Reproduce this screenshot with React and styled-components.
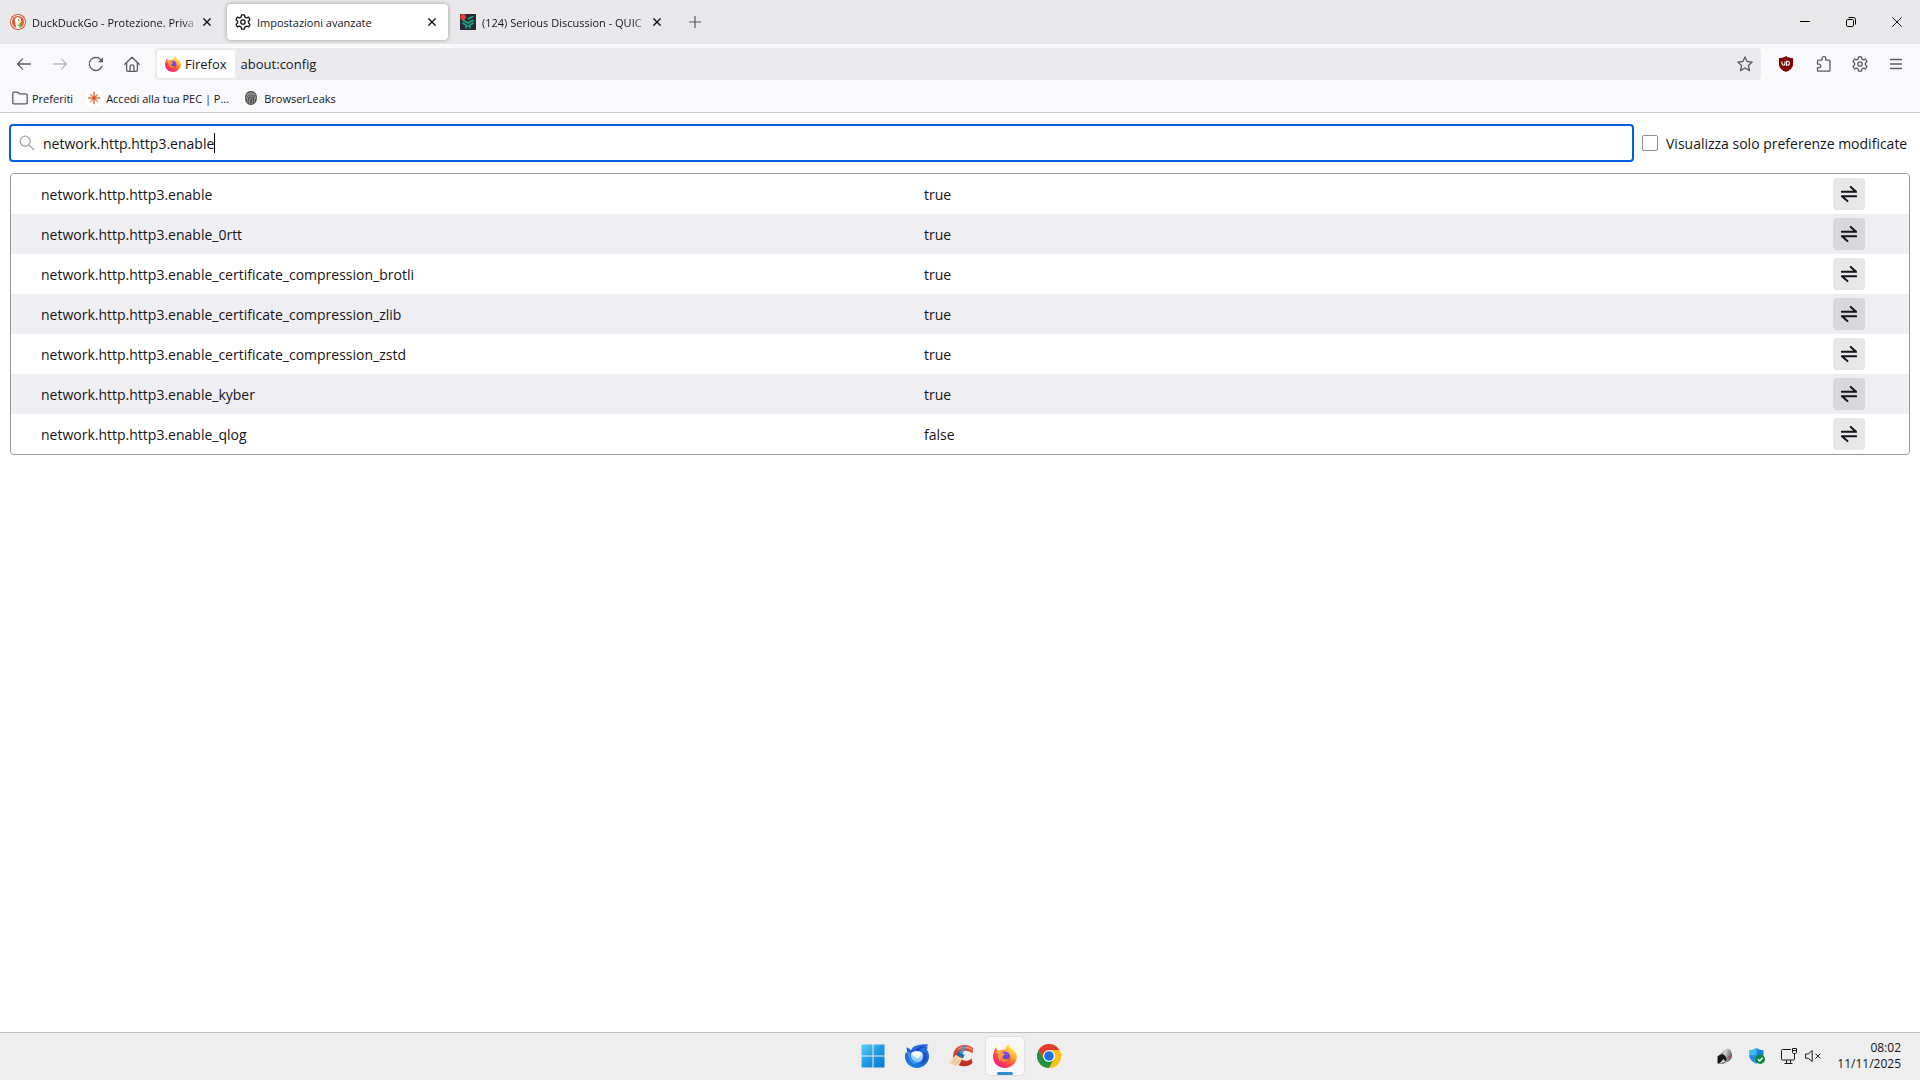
import styled, { createGlobalStyle, css } from "styled-components";

const prefs = [
  { name: "network.http.http3.enable", value: "true" },
  { name: "network.http.http3.enable_0rtt", value: "true" },
  { name: "network.http.http3.enable_certificate_compression_brotli", value: "true" },
  { name: "network.http.http3.enable_certificate_compression_zlib", value: "true" },
  { name: "network.http.http3.enable_certificate_compression_zstd", value: "true" },
  { name: "network.http.http3.enable_kyber", value: "true" },
  { name: "network.http.http3.enable_qlog", value: "false" },
];

const tabs = [
  { title: "DuckDuckGo - Protezione. Priva", icon: DuckIcon, faded: true },
  { title: "Impostazioni avanzate", icon: GearIcon, active: true },
  { title: "(124) Serious Discussion - QUIC", icon: ForumIcon, faded: true },
];

export default function App() {
  return (
    <Window>
      <GlobalStyle />
      <TabStrip>
        {tabs.map(({ title, icon: Icon, active, faded }) => (
          <Tab key={title} $active={active}>
            <Icon />
            <TabLabel $faded={faded}>{title}</TabLabel>
            <TabClose aria-label="Chiudi scheda">
              <CrossIcon size={8} width={1.4} />
            </TabClose>
          </Tab>
        ))}
        <NewTab aria-label="Nuova scheda">
          <svg width="12" height="12" viewBox="0 0 12 12">
            <path d="M6 0v12M0 6h12" stroke="#5b5b66" strokeWidth="1.2" />
          </svg>
        </NewTab>
        <WindowControls>
          <WindowButton aria-label="Riduci a icona">
            <svg width="10" height="10" viewBox="0 0 10 10">
              <path d="M0 4.5h10" stroke="#000" />
            </svg>
          </WindowButton>
          <WindowButton aria-label="Ripristina">
            <svg width="10" height="10" viewBox="0 0 10 10" fill="none" stroke="#000">
              <rect x=".5" y="2.5" width="7" height="7" rx="1.2" />
              <path d="M2.5 .5h5a2 2 0 0 1 2 2v5" />
            </svg>
          </WindowButton>
          <WindowButton aria-label="Chiudi">
            <CrossIcon size={10} width={1} />
          </WindowButton>
        </WindowControls>
      </TabStrip>

      <NavBar>
        <ToolButton aria-label="Indietro">
          <ArrowIcon />
        </ToolButton>
        <ToolButton aria-label="Avanti" disabled>
          <ArrowIcon flip />
        </ToolButton>
        <ToolButton aria-label="Ricarica">
          <svg {...stroke16}>
            <path d="M13.9 10.2A6.5 6.5 0 1 1 12.6 3.6L14.2 5.2" />
            <path d="M15 1.3v5h-5z" fill="currentColor" stroke="none" />
          </svg>
        </ToolButton>
        <ToolButton aria-label="Pagina iniziale">
          <svg {...stroke16}>
            <path d="M.8 8.2 8 1.2l7.2 7M2.6 6.8v7.3c0 .7.5 1.2 1.2 1.2h8.4c.7 0 1.2-.5 1.2-1.2V6.8" />
            <path d="M6 15v-4.2a2 2 0 0 1 4 0V15" />
          </svg>
        </ToolButton>
        <UrlBar>
          <Identity>
            <FirefoxIcon id="ff-url" size={16} />
            Firefox
          </Identity>
          <UrlInput aria-label="Indirizzo" defaultValue="about:config" />
          <StarButton aria-label="Aggiungi ai segnalibri">
            <svg {...stroke16}>
              <path d="m8 .9 2.1 4.6 5.1.6-3.8 3.4 1.1 5.1L8 12l-4.5 2.6 1.1-5.1L.8 6.1l5.1-.6z" />
            </svg>
          </StarButton>
        </UrlBar>
        <ToolGroup>
          <ToolButton aria-label="uBlock Origin">
            <ShieldIcon />
          </ToolButton>
          <ToolButton aria-label="Estensioni">
            <svg {...stroke16}>
              <path d="M3.9 4.2H6V2.6a1.9 1.9 0 0 1 3.8 0v1.6h3.3c.5 0 .9.4.9.9v9.2c0 .5-.4.9-.9.9H2.4c-.5 0-.9-.4-.9-.9v-2.6H3a1.7 1.7 0 0 0 0-3.5H1.5V5.1c0-.5.4-.9.9-.9z" />
            </svg>
          </ToolButton>
          <ToolButton aria-label="Impostazioni">
            <GearIcon />
          </ToolButton>
          <ToolButton aria-label="Menu">
            <svg {...stroke16}>
              <path d="M2.5 3.5h11M2.5 8h11M2.5 12.5h11" />
            </svg>
          </ToolButton>
        </ToolGroup>
      </NavBar>

      <Bookmarks>
        <Bookmark href="#preferiti">
          <svg {...stroke16} stroke="#5b5b66">
            <path d="M.8 12.7V3.3c0-.6.5-1.1 1.1-1.1h4l1.6 1.7h6.6c.6 0 1.1.5 1.1 1.1v7.7c0 .6-.5 1.1-1.1 1.1H1.9c-.6 0-1.1-.5-1.1-1.1z" />
          </svg>
          Preferiti
        </Bookmark>
        <Bookmark href="#pec">
          <svg width="16" height="16" viewBox="0 0 16 16">
            <rect width="16" height="16" rx="3" fill="#fff" />
            <path d="M8 1.8v12.4M1.8 8h12.4" stroke="#ee6c35" strokeWidth="1.5" />
            <path d="m4.200 4.200 7.600 7.600M11.800 4.200l-7.600 7.600" stroke="#ee6c35" strokeWidth="1.100" />
            <circle cx="8" cy="8" r="1.600" fill="#d4501c" />
          </svg>
          Accedi alla tua PEC | P...
        </Bookmark>
        <Bookmark href="#browserleaks">
          <FingerprintIcon />
          BrowserLeaks
        </Bookmark>
      </Bookmarks>

      <Page>
        <SearchRow>
          <SearchBox>
            <svg width="16" height="16" viewBox="0 0 16 16" fill="none" stroke="#a5a5a8" strokeWidth="1.3">
              <circle cx="6.2" cy="6.2" r="5" />
              <path d="m10 10 5 5" />
            </svg>
            <SearchField>
              <SearchInput aria-label="Cerca nome preferenza" defaultValue="network.http.http3.enable" />
              <Caret />
            </SearchField>
          </SearchBox>
          <Check>
            <input type="checkbox" />
            Visualizza solo preferenze modificate
          </Check>
        </SearchRow>
        <PrefTable>
          <tbody>
            {prefs.map((pref) => (
              <tr key={pref.name}>
                <NameCell scope="row">{pref.name}</NameCell>
                <ValueCell>{pref.value}</ValueCell>
                <ButtonCell>
                  <ToggleButton aria-label="Attiva/disattiva">
                    <svg width="16" height="16" viewBox="0 0 16 16" fill="none" stroke="#15141a" strokeWidth="2">
                      <path d="M.8 5.7H15L9.8.9M15.2 10.2H1l5.4 4.9" strokeLinecap="round" />
                    </svg>
                  </ToggleButton>
                </ButtonCell>
              </tr>
            ))}
          </tbody>
        </PrefTable>
      </Page>

      <Taskbar>
        <span />
        <Apps>
          <AppButton aria-label="Start">
            <WindowsIcon />
          </AppButton>
          <AppButton aria-label="Thunderbird">
            <ThunderbirdIcon />
          </AppButton>
          <AppButton aria-label="CCleaner">
            <CCleanerIcon />
          </AppButton>
          <AppButton aria-label="Firefox" $active>
            <FirefoxIcon id="ff-task" size={24} />
          </AppButton>
          <AppButton aria-label="Chrome">
            <ChromeIcon />
          </AppButton>
        </Apps>
        <Tray>
          <TrayIcons>
            <MouseIcon />
            <DefenderIcon />
            <NetworkIcon />
            <MuteIcon />
          </TrayIcons>
          <Clock>
            <span>08:02</span>
            <span>11/11/2025</span>
          </Clock>
        </Tray>
      </Taskbar>
    </Window>
  );
}

const stroke16 = {
  width: 16,
  height: 16,
  viewBox: "0 0 16 16",
  fill: "none",
  stroke: "currentColor",
  strokeWidth: 1.3,
  strokeLinejoin: "round",
  strokeLinecap: "round",
};

function CrossIcon({ size, width }) {
  return (
    <svg width={size} height={size} viewBox={`0 0 ${size} ${size}`}>
      <path d={`M.4 .4 ${size - 0.4} ${size - 0.4}M${size - 0.4} .4 .4 ${size - 0.4}`} stroke="#15141a" strokeWidth={width} />
    </svg>
  );
}

function ArrowIcon({ flip }) {
  return (
    <svg {...stroke16}>
      <path d={flip ? "M1.5 8h13M9.4 2.9 14.5 8l-5.1 5.1" : "M14.5 8h-13M6.6 2.9 1.5 8l5.1 5.1"} />
    </svg>
  );
}

function GearIcon() {
  return (
    <svg {...stroke16}>
      <path d="M6.6.8h2.8l.5 2.2 1.5.9 2.2-.7L15 5.6l-1.6 1.6v1.6l1.6 1.6-1.4 2.4-2.2-.7-1.5.9-.5 2.2H6.6L6.1 13l-1.5-.9-2.2.7L1 10.4l1.6-1.6V7.2L1 5.6l1.4-2.4 2.2.7L6.1 3z" />
      <circle cx="8" cy="8" r="2.2" />
    </svg>
  );
}

function DuckIcon() {
  return (
    <svg width="16" height="16" viewBox="0 0 16 16">
      <circle cx="8" cy="8" r="8" fill="#de5833" />
      <circle cx="8" cy="8" r="6.5" fill="none" stroke="#fff" strokeWidth="1" />
      <path d="M6.2 13.8 4.8 6.5c-.3-2 1-3.4 3-3.3 2.2.1 3.2 1.6 3.2 3.6v2L9.6 9l.5 4.6c-1.2.6-2.7.6-3.9.2z" fill="#fff" />
      <circle cx="8.6" cy="6" r=".7" fill="#2d4f8e" />
      <path d="M8.3 7.7c1.2-.5 2.6-.5 3.7-.2l-1.2 1.3H8.3z" fill="#fdd20a" />
      <path d="m8 10.6 3.4-.6v2.8L8 12.3z" fill="#65bc46" />
    </svg>
  );
}

function ForumIcon() {
  return (
    <svg width="16" height="16" viewBox="0 0 16 16">
      <rect width="16" height="16" fill="#262a33" />
      <path d="m2.5 6 5.500 3 5.500-3M2.500 9 6 11v3.500M13.500 9 10 11v3.500M8 5l5-2.500M8 11v2" fill="none" stroke="#1fa587" strokeWidth="1.7" />
      <circle cx="3" cy="3" r="2.9" fill="#f03a3a" />
    </svg>
  );
}

function FingerprintIcon() {
  return (
    <Print width="14" height="14" viewBox="0 0 14 14">
      <path d="M7 0c3.500 0 6 2.500 6 6.500 0 4-2.300 7.500-6 7.500S1 10.500 1 6.500C1 2.500 3.500 0 7 0z" fill="#4a4a4a" />
      <path
        d="M2 4.500C4 1 10 1 12 4.500M2 8c0-6.500 10-6.500 10 0M4 11.500C3 6 4 5 7 5s4 1.500 3.300 6.500M6 13c-.8-5-.5-6 1-6s1.600 2 1 6"
        fill="none"
        stroke="#c9c9c9"
        strokeWidth=".7"
      />
    </Print>
  );
}

function ShieldIcon() {
  return (
    <svg width="16" height="16" viewBox="0 0 16 16">
      <path d="M8 0c2 1.4 4 2 7 2v6c0 4-3 6.4-7 8-4-1.6-7-4-7-8V2c3 0 5-.6 7-2z" fill="#800000" />
      <path d="M4 5.5v2.200a1.500 1.500 0 0 0 3 0V5.500M8.500 5.300v3.900h1a1.900 1.900 0 1 0 0-3.900z" fill="none" stroke="#fff" strokeWidth="1.1" />
    </svg>
  );
}

function FirefoxIcon({ id, size }) {
  return (
    <svg width={size} height={size} viewBox="0 0 24 24">
      <defs>
        <linearGradient id={`${id}-a`} x1=".85" y1=".1" x2=".2" y2=".95">
          <stop offset=".05" stopColor="#fff44f" />
          <stop offset=".35" stopColor="#ffa436" />
          <stop offset=".6" stopColor="#ff5a3c" />
          <stop offset=".85" stopColor="#ff2a6b" />
          <stop offset="1" stopColor="#e31587" />
        </linearGradient>
        <linearGradient id={`${id}-b`} x1=".3" y1="0" x2=".7" y2="1">
          <stop offset="0" stopColor="#9059ff" />
          <stop offset="1" stopColor="#5b2fc4" />
        </linearGradient>
        <linearGradient id={`${id}-c`} x1="0" y1="0" x2="1" y2="1">
          <stop offset="0" stopColor="#ffbd4f" />
          <stop offset="1" stopColor="#ff6a2b" />
        </linearGradient>
      </defs>
      <path
        d="M22.7 8.5c-.5-1.3-1.6-2.6-2.4-3 .7 1.3 1.1 2.7 1.2 3.5C20.2 5.7 18 4.4 16.2 1.5c-.3-.5-.5-.9-.5-1.5-2.3 1.3-3.3 3.700-3.500 5.300-1 .1-2 .4-2.800.8L4.200 6.500c-.5-.6-.6-2.300-.5-3.200C2.200 4.200 1.300 6.200 1 7.700.4 9.100 0 11.300 0 12.500 0 18.900 5.300 24 11.900 24 18 24 23 19.700 23.900 14c.2-2 0-3.900-1.200-5.500z"
        fill={`url(#${id}-a)`}
      />
      <circle cx="11.7" cy="12.5" r="5.3" fill={`url(#${id}-b)`} />
      <path
        d="M2.3 8.3c1.700-1.700 3.600-2 5.200-1.200 1.200-.5 2.600-.5 3.600.3-1.100.3-2 1-2.100 1.700.2.600 2.300.7 3 .9-.2 1.300-2.200 1.700-2.600 2.800-.2 1.500 1.300 2.700 3.200 2.500 1.700-.2 2.300-1.200 3.600-.9-1 2.700-3.300 3.800-5.800 3.500C6.500 17.400 4 14 5.200 9.800z"
        fill={`url(#${id}-c)`}
      />
    </svg>
  );
}

function WindowsIcon() {
  return (
    <svg width="24" height="24" viewBox="0 0 24 24">
      <defs>
        <linearGradient id="win" gradientUnits="userSpaceOnUse" x1="0" y1="0" x2="24" y2="24">
          <stop offset="0" stopColor="#5fd3fb" />
          <stop offset=".5" stopColor="#1f9be6" />
          <stop offset="1" stopColor="#0574d1" />
        </linearGradient>
      </defs>
      <path d="M.5 .5h11v11H.5zM12.500 .5h11v11h-11zM.5 12.500h11v11H.5zM12.500 12.500h11v11h-11z" fill="url(#win)" />
    </svg>
  );
}

function ThunderbirdIcon() {
  return (
    <svg width="24" height="24" viewBox="0 0 24 24">
      <defs>
        <linearGradient id="tb" x1=".8" y1="0" x2=".2" y2="1">
          <stop offset="0" stopColor="#2a6fe8" />
          <stop offset=".5" stopColor="#1f62d6" />
          <stop offset="1" stopColor="#1b86e6" />
        </linearGradient>
        <linearGradient id="tb-mail" x1="0" y1="0" x2="0" y2="1">
          <stop offset="0" stopColor="#cfeaff" />
          <stop offset="1" stopColor="#7fc4fb" />
        </linearGradient>
      </defs>
      <path
        d="M1.5 3.500c2 .2 3.300 1.300 4.300 3C7.500 3 11 .8 15.500.8c2.700-.6 5.500-.6 8 0-1 .9-1.600 1.600-1.700 2.400.9.200 1.300.5 1.600.9-1 .3-1.500.6-1.600 1.100C23.300 7.300 24 9.700 24 12.300 24 18.900 18.700 24 12 24S0 19 0 12.800c0-2 .4-3.500 1-4.800l1.500 2z"
        fill="url(#tb)"
      />
      <path d="M11 6.500C13 3 17 1.800 20.500 3c-3 .2-5.200 1.400-6.500 3.500z" fill="#1a3f9e" />
      <path d="M18 8.500c2 4.500.5 9.500-4 11.500 5.500-.2 9-4.800 7.500-10.500z" fill="#1550bd" />
      <path d="M6 9.500c3-2.800 9-3 11.500.2 1.500 4.300-.5 8.300-5 8.800-4.500-.5-7.500-4.500-6.500-9z" fill="url(#tb-mail)" />
      <path d="M6 9.500c3-2.800 9-3 11.500.2l-5.200 4.800z" fill="#f5fbff" />
      <path d="M4 8c-.5 6 2 10 7 12" fill="none" stroke="#3f9bf5" strokeWidth="1.5" />
    </svg>
  );
}

function CCleanerIcon() {
  return (
    <svg width="24" height="24" viewBox="0 0 24 24">
      <defs>
        <linearGradient id="cc" x1="0" y1="0" x2="0" y2="1">
          <stop offset="0" stopColor="#e2553f" />
          <stop offset="1" stopColor="#b92a1c" />
        </linearGradient>
      </defs>
      <path
        d="M23.5 9.500 24 4C21.500 1.800 18.500.8 15 1 8.500 1.300 4 6 4.200 12c.2 6 4.800 10.300 11 10.200 3.300 0 6-1 8.300-3.200l-1-4.500c-2 1.800-4 2.500-6.300 2.200-3-.3-4.700-2.300-4.700-5 0-2.800 2-4.800 5-5 2.500-.2 4.500.8 7 2.800z"
        fill="url(#cc)"
      />
      <path d="M23.7 5C19 1.500 11 1.500 7 6.500c5-3 11.500-3 16.500.2z" fill="#f08b74" />
      <path d="m14.500 1.500 2.200 1-3.200 7.500-3-1.500z" fill="#3a9bdc" />
      <path d="m9.800 7.800 5.700 3.200-1.500 3.500-7-4z" fill="#1d6cae" />
      <path d="M6.500 10.800 13 14.500c-.8 3.500-2.500 6.500-5 7.500C5 21.500 2 20.200 0 18.200c2.700-1.500 5-4.200 6.500-7.400z" fill="#f5d6a8" />
      <path d="M7 14c-.8 2-2 3.800-3.500 5.200M10 16c-.8 2-2 3.700-3.500 5" stroke="#dcae74" strokeWidth=".8" fill="none" />
    </svg>
  );
}

function ChromeIcon() {
  return (
    <svg width="24" height="24" viewBox="0 0 24 24">
      <circle cx="12" cy="12" r="12" fill="#fbc116" />
      <path d="M12 12 6.8 15 1.6 6A12 12 0 0 1 22.4 6H12z" fill="#e33b2e" />
      <path d="M12 24A12 12 0 0 1 1.6 6l5.200 9L12 18l5.200-3z" fill="#229342" />
      <path d="M12 6h10.400A12 12 0 0 1 12 24l5.200-9z" fill="#fbc116" />
      <circle cx="12" cy="12" r="6" fill="#fff" />
      <circle cx="12" cy="12" r="4.8" fill="#1a73e8" />
    </svg>
  );
}

function MouseIcon() {
  return (
    <svg width="16" height="16" viewBox="0 0 16 16">
      <defs>
        <linearGradient id="mouse" x1="0" y1="0" x2="1" y2=".3">
          <stop offset="0" stopColor="#555" />
          <stop offset=".55" stopColor="#d0d0d0" />
          <stop offset="1" stopColor="#666" />
        </linearGradient>
      </defs>
      <path d="M1.5 8C4.500 4.500 8 1 10.500.5c2.800.2 4.500 3.500 4.500 7.500 0 3-3 5.500-7 7H1z" fill="url(#mouse)" />
      <path d="M.5 8.500C3 6.500 5 6 6.500 6.500c2 1.500 3.200 3.500 3 5.500L7 15.500H.5z" fill="#161616" />
      <path d="m2.500 15.500 4-4.500 2 3z" fill="#ddd" />
      <path d="m10.500 9.500 2.500-1" stroke="#d33" strokeWidth="1.2" />
    </svg>
  );
}

function DefenderIcon() {
  return (
    <svg width="16" height="16" viewBox="0 0 16 16">
      <path d="M7.5 0C9.500 1.500 12 2.200 14.500 2.200V7c0 4-3 7-7 8.500C3.500 14 .5 11 .5 7V2.200C3 2.200 5.500 1.500 7.500 0z" fill="#1683d8" />
      <path d="M7.5 0v7.500H.5V2.200C3 2.200 5.500 1.500 7.500 0z" fill="#3fbcf5" />
      <path d="M7.5 7.500h-7c0 3.500 3 6.500 7 8z" fill="#1a8fe0" />
      <circle cx="11.2" cy="11.2" r="4.8" fill="#10893e" />
      <path d="m8.9 11.300 1.700 1.700 3-3.200" fill="none" stroke="#fff" strokeWidth="1.3" />
    </svg>
  );
}

function NetworkIcon() {
  return (
    <svg width="16" height="16" viewBox="0 0 16 16" fill="none" stroke="#1a1a1a">
      <path d="M10 1.500H1.500a1 1 0 0 0-1 1v8.500a1 1 0 0 0 1 1h11a1 1 0 0 0 1-1V7M5.500 12v3M9.500 12v3M3.500 15.500h8" />
      <path d="M11.500 .5h4v4a1 1 0 0 1-1 1h-2a1 1 0 0 1-1-1zM11.500 2.500h4M13.500 5.500V8" />
    </svg>
  );
}

function MuteIcon() {
  return (
    <svg width="16" height="16" viewBox="0 0 16 16" fill="none" stroke="#1a1a1a">
      <path d="M.5 6v4.200h2.700l4 3.300v-11L3.200 6zM10.500 5.700l4.800 4.800M15.300 5.700l-4.800 4.800" strokeLinejoin="round" />
    </svg>
  );
}

const GlobalStyle = createGlobalStyle`
  * {
    box-sizing: border-box;
  }

  body {
    margin: 0;
    background-color: #fff;
    color: #15141a;
    font-family: "Open Sans", "Noto Sans", sans-serif;
    font-size: 14px;
  }

  button, input {
    font: inherit;
    color: inherit;
    margin: 0;
    padding: 0;
    border: 0;
    background: none;
    outline: none;
  }

  svg {
    display: block;
    flex: none;
  }
`;

const Window = styled.div`
  min-height: 100vh;
  display: flex;
  flex-direction: column;
`;

const TabStrip = styled.div`
  height: 44px;
  padding-left: 2px;
  display: flex;
  align-items: center;
  gap: 4px;
  background-color: #e9e9eb;
  font-size: 11px;
`;

const Tab = styled.div`
  width: 221px;
  height: 36px;
  padding: 0 8px;
  display: flex;
  align-items: center;
  border-radius: 4px;

  ${({ $active }) =>
    $active &&
    css`
      background-color: #fff;
      box-shadow: 0 0 4px rgba(0, 0, 0, 0.35);
    `}
`;

const TabLabel = styled.span`
  flex: 1;
  min-width: 0;
  margin-left: 6px;
  overflow: hidden;
  white-space: nowrap;
  mask-image: ${({ $faded }) => ($faded ? "linear-gradient(to left, transparent, #000 16px)" : "none")};
`;

const TabClose = styled.button`
  width: 16px;
  height: 24px;
  display: grid;
  place-items: center;
`;

const NewTab = styled.button`
  width: 36px;
  height: 36px;
  display: grid;
  place-items: center;
`;

const WindowControls = styled.div`
  margin-left: auto;
  align-self: stretch;
  display: flex;
`;

const WindowButton = styled.button`
  width: 46px;
  display: grid;
  place-items: center;
`;

const NavBar = styled.div`
  height: 40px;
  padding: 0 6px;
  display: flex;
  align-items: center;
  background-color: #f9f9fb;
`;

const ToolButton = styled.button`
  width: 36px;
  height: 32px;
  display: grid;
  place-items: center;
  color: #5b5b66;

  &:disabled {
    opacity: 0.4;
  }
`;

const StarButton = styled(ToolButton)`
  width: 32px;
`;

const UrlBar = styled.div`
  flex: 1;
  height: 32px;
  margin: 0 7px 0 5px;
  padding-left: 2px;
  display: flex;
  align-items: center;
  border-radius: 4px;
  background-color: #ebebed;
  font-size: 13px;
`;

const Identity = styled.button`
  height: 28px;
  padding: 0 8px;
  display: flex;
  align-items: center;
  gap: 4px;
  border-radius: 3px;
  background-color: #fff;
`;

const UrlInput = styled.input`
  flex: 1;
  margin-left: 6px;
`;

const ToolGroup = styled.div`
  display: flex;

  button:first-child {
    margin-right: 2px;
  }
`;

const Bookmarks = styled.div`
  height: 29px;
  padding: 0 12px;
  display: flex;
  align-items: center;
  gap: 13px;
  border-bottom: 1px solid #ccc;
  background-color: #f9f9fb;
  font-size: 11px;
`;

const Bookmark = styled.a`
  display: flex;
  align-items: center;
  gap: 4px;
  color: inherit;
  text-decoration: none;
`;

const Print = styled.svg`
  margin: 0 2px;
`;

const Page = styled.main`
  flex: 1;
  padding: 11px 10px;
`;

const SearchRow = styled.div`
  display: flex;
  align-items: center;
  gap: 8px;
  margin: 0 0 11px -1px;
`;

const SearchBox = styled.label`
  flex: 1;
  height: 38px;
  padding: 0 8px;
  display: flex;
  align-items: center;
  gap: 8px;
  border: 2px solid #0061e0;
  border-radius: 4px;
`;

const SearchField = styled.span`
  display: flex;
  align-items: center;
`;

const SearchInput = styled.input`
  field-sizing: content;
  caret-color: transparent;
`;

const Caret = styled.span`
  width: 1px;
  height: 20px;
  background-color: #000;
`;

const Check = styled.label`
  min-width: 268px;
  display: flex;
  align-items: center;
  gap: 8px;

  input {
    appearance: none;
    width: 16px;
    height: 16px;
    border: 1px solid #8f8f9d;
    border-radius: 2px;
  }
`;

const PrefTable = styled.table`
  width: 100%;
  table-layout: fixed;
  border: 1px solid #98989c;
  border-radius: 4px;
  border-spacing: 0;
  overflow: hidden;

  tr {
    height: 40px;
  }

  tr:nth-child(even) {
    background-color: #efeef3;
  }
`;

const NameCell = styled.th`
  width: 48%;
  padding: 0 0 0 30px;
  font-weight: 400;
  text-align: left;
`;

const ValueCell = styled.td`
  padding: 0 0 0 2px;
`;

const ButtonCell = styled.td`
  width: 80px;
  padding: 0 0 0 4px;
`;

const ToggleButton = styled.button`
  width: 32px;
  height: 32px;
  display: grid;
  place-items: center;
  border-radius: 4px;
  background-color: rgba(21, 20, 26, 0.1);
`;

const Taskbar = styled.footer`
  height: 48px;
  padding-bottom: 1px;
  display: grid;
  grid-template-columns: 1fr auto 1fr;
  align-items: center;
  border-top: 1px solid #bfbfbf;
  background-color: #eee;
`;

const Apps = styled.nav`
  padding-left: 2px;
  display: flex;
  gap: 6px;
`;

const AppButton = styled.button`
  position: relative;
  width: 38px;
  height: 38px;
  display: grid;
  place-items: center;
  border-radius: 4px;

  ${({ $active }) =>
    $active &&
    css`
      background-color: #f8f8f8;
      box-shadow: 0 0 2px rgba(0, 0, 0, 0.2);

      &::after {
        content: "";
        position: absolute;
        bottom: 0;
        width: 16px;
        height: 3px;
        border-radius: 2px;
        background-color: #2f8fd0;
      }
    `}
`;

const Tray = styled.div`
  justify-self: end;
  padding-right: 19px;
  display: flex;
  align-items: center;
  gap: 16px;
`;

const TrayIcons = styled.div`
  display: flex;
  align-items: center;
  gap: 16px;

  svg:last-child {
    margin-left: -8px;
  }
`;

const Clock = styled.time`
  display: flex;
  flex-direction: column;
  align-items: flex-end;
  font-size: 12px;
  line-height: 16px;
`;
